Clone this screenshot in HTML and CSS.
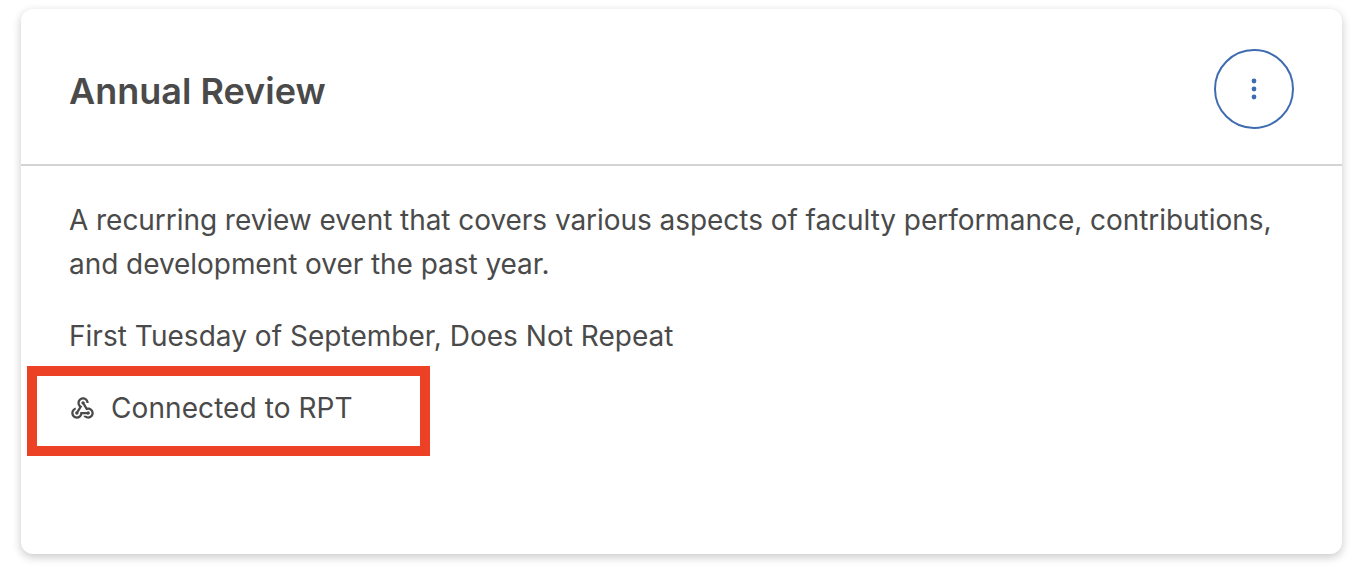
FILE: index.html
```html
<!DOCTYPE html>
<html lang="en">
<head>
<meta charset="utf-8">
<title>Annual Review</title>
<link rel="stylesheet" href="styles.css">
</head>
<body>
<section class="card">
  <header class="card-head">
    <h2 class="title">Annual Review</h2>
    <button class="menu-btn" aria-label="More options">
      <svg width="6" height="22" viewBox="0 0 6 22"><circle cx="3" cy="3" r="2.4"/><circle cx="3" cy="11" r="2.4"/><circle cx="3" cy="19" r="2.4"/></svg>
    </button>
  </header>
  <div class="card-body">
    <p class="desc">A recurring review event that covers various aspects of faculty performance, contributions, and development over the past year.</p>
    <p class="line">First Tuesday of September, Does Not Repeat</p>
    <p class="line connected">
      <svg class="hook" width="27" height="27" viewBox="0 0 24 24">
        <path d="M10 15h5.88c.27-.31.67-.5 1.12-.5.83 0 1.5.67 1.5 1.5s-.67 1.5-1.5 1.5c-.44 0-.84-.19-1.12-.5H11.9c-.46 2.28-2.48 4-4.9 4-2.76 0-5-2.24-5-5 0-2.42 1.72-4.44 4-4.9v2.07c-1.16.41-2 1.53-2 2.83 0 1.65 1.35 3 3 3s3-1.35 3-3v-1zm2.5-11c1.65 0 3 1.35 3 3h2c0-2.76-2.24-5-5-5s-5 2.24-5 5c0 1.43.6 2.71 1.55 3.62l-2.35 3.9c-.68.14-1.2.75-1.2 1.48 0 .83.67 1.5 1.5 1.5s1.5-.67 1.5-1.5c0-.16-.02-.31-.07-.45l3.38-5.63C10.49 9.61 9.5 8.42 9.5 7c0-1.65 1.35-3 3-3zm4.5 9c-.64 0-1.23.2-1.72.54l-3.05-5.07C11.53 8.35 11 7.74 11 7c0-.83.67-1.5 1.5-1.5S14 6.17 14 7c0 .15-.02.29-.06.43l2.19 3.65c.28-.05.57-.08.87-.08 2.76 0 5 2.24 5 5s-2.24 5-5 5c-1.85 0-3.47-1.01-4.33-2.5h2.67c.48.32 1.05.5 1.66.5 1.65 0 3-1.35 3-3s-1.35-3-3-3z"/>
      </svg>
      <span>Connected to RPT</span>
    </p>
  </div>
  <div class="highlight"></div>
</section>
</body>
</html>
```
FILE: styles.css
```css
* { box-sizing: border-box; }
html, body { margin: 0; height: 100%; background: #fff; }
body {
  padding: 9px 16px 22px 21px;
  font-family: Inter, "Liberation Sans", sans-serif;
  color: #4a4a4a;
}
.card {
  position: relative;
  height: 545px;
  background: #fff;
  border-radius: 12px;
  box-shadow: 0 3px 10px rgba(0, 0, 0, 0.22);
}
.card-head {
  display: flex;
  align-items: center;
  justify-content: space-between;
  height: 157px;
  padding: 0 48px;
  border-bottom: 2px solid #d4d4d4;
}
.title {
  margin: 8px 0 0;
  font-size: 36px;
  line-height: 44px;
  font-weight: 600;
  color: #4a4a4a;
}
.menu-btn {
  display: flex;
  align-items: center;
  justify-content: center;
  width: 80px;
  height: 80px;
  margin-top: 4px;
  padding: 0;
  background: #fff;
  border: 2px solid #3f6cb0;
  border-radius: 50%;
}
.menu-btn svg { fill: #3f6cb0; }
.card-body { padding: 32px 48px 0; }
.desc, .line {
  margin: 0 0 28px;
  font-size: 28px;
  line-height: 44px;
}
.desc { letter-spacing: -0.05px; }
.line { letter-spacing: 0.03px; }
.connected { display: flex; align-items: center; gap: 15px; letter-spacing: 0.08px; }
.hook { flex: none; fill: #4a4a4a; }
.highlight {
  position: absolute;
  left: 6px;
  top: 357px;
  width: 403px;
  height: 90px;
  border: 10px solid #ec4125;
}
```
